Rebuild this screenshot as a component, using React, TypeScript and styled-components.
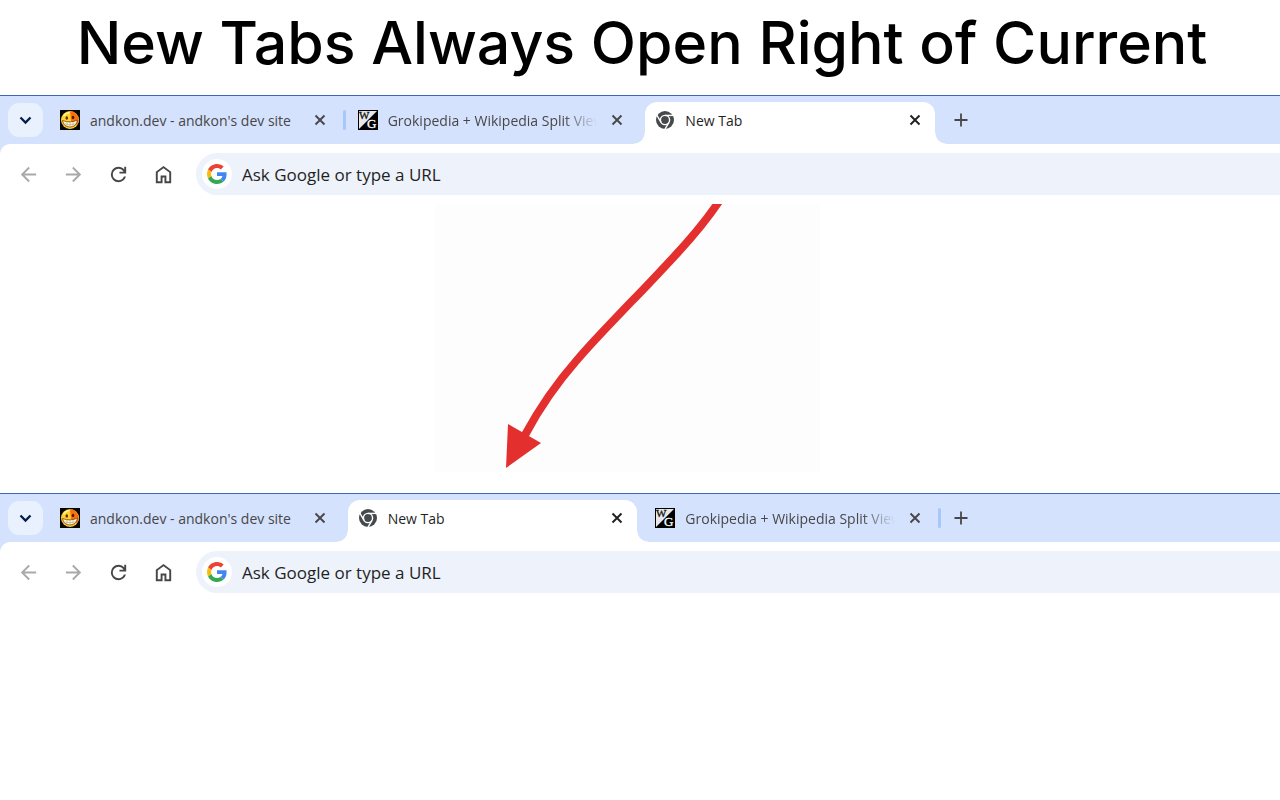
import React from "react";
import styled, { createGlobalStyle, css } from "styled-components";

const Global = createGlobalStyle`
  *, *::before, *::after { box-sizing: border-box; }
  body { margin: 0; background: #fff; color: #1f1f1f; font-family: "Open Sans", "Noto Sans", sans-serif; }
`;

const Page = styled.main`
  display: flex;
  flex-direction: column;
  min-height: 100vh;
  overflow: hidden;
`;

const Headline = styled.h1`
  margin: 0;
  height: 95px;
  padding: 0 0 10px 4px;
  display: flex;
  align-items: center;
  justify-content: center;
  white-space: nowrap;
  font: 500 59px/80px "Inter", sans-serif;
  color: #000;
`;

const BrowserWindow = styled.section`
  border-top: 1px solid #3b69b3;
`;

const TabStrip = styled.div`
  display: flex;
  align-items: flex-end;
  height: 48px;
  background: #d5e2fd;
`;

const IconButton = styled.button`
  display: grid;
  place-items: center;
  flex: none;
  padding: 0;
  border: 0;
  background: none;
  color: #474747;
  svg { display: block; }
`;

const SearchTabs = styled(IconButton)`
  width: 35px;
  height: 34px;
  margin: 0 7px 7px 8px;
  border-radius: 11px;
  background: #e9f1fe;
  color: #041e49;
`;

const TabList = styled.div`
  display: flex;
  gap: 8px;
  flex: 0 1 885px;
  min-width: 0;
`;

const flare = css`
  content: "";
  position: absolute;
  bottom: 0;
  width: 11px;
  height: 11px;
`;

const Tab = styled.div<{ $active?: boolean; $divider?: boolean }>`
  position: relative;
  display: flex;
  align-items: center;
  flex: 1 1 0;
  min-width: 0;
  height: 42px;
  padding: 0 12px 7px 10px;
  border-radius: 12px 12px 0 0;
  color: #474747;
  ${(p) =>
    p.$active &&
    css`
      background: #fff;
      color: #1f1f1f;
      &::before { ${flare} left: -11px; background: radial-gradient(circle at 0 0, transparent 10px, #fff 11px); }
      &::after { ${flare} right: -11px; background: radial-gradient(circle at 100% 0, transparent 10px, #fff 11px); }
    `}
  ${(p) =>
    p.$divider &&
    css`
      &::after {
        content: "";
        position: absolute;
        top: 8px;
        right: -6px;
        width: 3px;
        height: 20px;
        border-radius: 2px;
        background: #a8c7fa;
      }
    `}
`;

const Favicon = styled.span`
  display: grid;
  place-items: center;
  flex: none;
  width: 20px;
  height: 20px;
  margin-right: 10px;
`;

const TabTitle = styled.span<{ $fade?: boolean }>`
  flex: 1;
  min-width: 0;
  padding-top: 2px;
  overflow: hidden;
  white-space: nowrap;
  font-size: 14px;
  line-height: 20px;
  ${(p) => p.$fade && css`mask-image: linear-gradient(90deg, #000 84%, transparent);`}
`;

const CloseTab = styled(IconButton)`
  width: 16px;
  height: 20px;
  margin-left: 12px;
  color: inherit;
`;

const NewTab = styled(IconButton)`
  width: 34px;
  height: 34px;
  margin: 0 0 7px 9px;
`;

const Toolbar = styled.div`
  display: flex;
  align-items: center;
  height: 60px;
  padding-left: 6px;
  border-radius: 10px 0 0 0;
  background: #fff;
`;

const ToolbarBack = styled.div`
  background: #d5e2fd;
`;

const ToolButton = styled(IconButton)`
  width: 45px;
  height: 40px;
  &:disabled { color: #a9a9a9; }
`;

const Omnibox = styled.label`
  display: flex;
  align-items: center;
  flex: 1;
  height: 42px;
  margin-left: 10px;
  padding-left: 6px;
  border-radius: 21px 0 0 21px;
  background: #edf2fb;
`;

const EngineBadge = styled.span`
  display: grid;
  place-items: center;
  flex: none;
  width: 30px;
  height: 30px;
  border-radius: 50%;
  background: #fff;
`;

const UrlField = styled.input`
  flex: 1;
  min-width: 0;
  margin-left: 10px;
  padding: 2px 0 0;
  border: 0;
  outline: 0;
  background: none;
  font: 400 17px/24px "Open Sans", "Noto Sans", sans-serif;
  color: #1f1f1f;
  &::placeholder { color: #1f1f1f; opacity: 1; }
`;

const Viewport = styled.div`
  padding: 0 0 21px 34%;
`;

const ArrowDrawing = styled.svg`
  display: block;
  background: #fdfdfd;
`;

function SmileyIcon() {
  return (
    <svg width="20" height="20" viewBox="0 0 20 20" aria-hidden="true">
      <rect width="20" height="20" fill="#050505" />
      <circle cx="10" cy="10" r="9" fill="#ffd22e" />
      <path d="M10 1a9 9 0 0 1 7 14L11 11z" fill="#f9700f" />
      <path d="M3.500 6q3-4 6-3" stroke="#fff39a" strokeWidth="1.500" fill="none" />
      <ellipse cx="6.800" cy="8" rx="1.300" ry="1.800" fill="#5a3208" />
      <ellipse cx="13" cy="7.500" rx="1.300" ry="1.800" fill="#5a1604" />
      <path d="M2.500 10.500q8 3 15-.5q-1 7-7.500 7t-7.500-6.500z" fill="#fff8e1" stroke="#7d3f08" strokeWidth=".8" />
      <path d="M4 13.800q6 1.800 12 0M7 12v4M10 12v4.500M13 12v4" stroke="#a98d68" strokeWidth=".5" fill="none" />
    </svg>
  );
}

function SplitIcon() {
  return (
    <svg width="20" height="20" viewBox="0 0 20 20" aria-hidden="true">
      <rect width="20" height="20" fill="#000" />
      <path d="M1 1h18L1 19z" fill="#e8e8e8" />
      <g fontFamily="Liberation Serif, serif">
        <text x="1" y="9" fontSize="11" fill="#111" stroke="#111" strokeWidth=".3">W</text>
        <text x="9" y="18" fontSize="13" fill="#fff" stroke="#fff" strokeWidth=".3">G</text>
      </g>
    </svg>
  );
}

function ChromeIcon() {
  return (
    <svg width="18" height="18" viewBox="-9 -9 18 18" aria-hidden="true">
      <circle r="9" fill="#474a4d" />
      <g stroke="#fff" strokeWidth="1.400" fill="none">
        <circle r="4.600" />
        {[0, 120, 240].map((a) => (
          <path key={a} d="M0-4.600H9" transform={`rotate(${a})`} />
        ))}
      </g>
    </svg>
  );
}

function GoogleIcon() {
  return (
    <svg width="20" height="20" viewBox="0 0 48 48" aria-hidden="true">
      <path fill="#ea4335" d="M24 9.500c3.540 0 6.710 1.220 9.210 3.600l6.850-6.850C35.900 2.380 30.470 0 24 0 14.620 0 6.510 5.380 2.560 13.220l7.980 6.190C12.430 13.720 17.740 9.500 24 9.500z" />
      <path fill="#4285f4" d="M46.980 24.550c0-1.570-.15-3.090-.38-4.550H24v9.020h12.940c-.58 2.960-2.260 5.480-4.780 7.180l7.730 6c4.510-4.180 7.090-10.360 7.090-17.650z" />
      <path fill="#fbbc05" d="M10.530 28.590c-.48-1.450-.76-2.990-.76-4.590s.27-3.140.76-4.590l-7.980-6.190C.92 16.460 0 20.120 0 24s.92 7.540 2.560 10.780l7.970-6.190z" />
      <path fill="#34a853" d="M24 48c6.480 0 11.930-2.130 15.890-5.810l-7.730-6c-2.150 1.450-4.920 2.300-8.160 2.300-6.260 0-11.570-4.220-13.470-9.910l-7.980 6.190C6.510 42.620 14.620 48 24 48z" />
    </svg>
  );
}

function Glyph({ d, size = 23 }: { d: string; size?: number }) {
  return (
    <svg width={size} height={size} viewBox="0 0 24 24" fill="currentColor" aria-hidden="true">
      <path d={d} />
    </svg>
  );
}

const glyphs = {
  back: "M20 11H7.830l5.590-5.590L12 4l-8 8 8 8 1.410-1.410L7.830 13H20z",
  forward: "M4 11h12.170l-5.590-5.590L12 4l8 8-8 8-1.410-1.410L16.170 13H4z",
  reload:
    "M12 20q-3.350 0-5.675-2.325T4 12t2.325-5.675T12 4q1.725 0 3.300.712T18 6.750V4h2v7h-7V9h4.200q-.8-1.400-2.187-2.200T12 6Q9.500 6 7.750 7.750T6 12t1.750 4.250T12 18q1.925 0 3.475-1.100T17.650 14h2.100q-.7 2.650-2.850 4.325T12 20",
  home: "M6 19h3v-6h6v6h3v-9l-6-4.500L6 10zm-2 2V9l8-6 8 6v12h-7v-6h-2v6z",
};

function Cross() {
  return (
    <svg width="12" height="12" viewBox="0 0 12 12" stroke="currentColor" strokeWidth="1.900" aria-hidden="true">
      <path d="M1.500 1.500l9 9M10.500 1.500l-9 9" />
    </svg>
  );
}

type TabInfo = { title: string; icon: React.ReactNode; fade?: boolean };

const andkon: TabInfo = { title: "andkon.dev - andkon's dev site", icon: <SmileyIcon /> };
const grokipedia: TabInfo = { title: "Grokipedia + Wikipedia Split View", icon: <SplitIcon />, fade: true };
const newTab: TabInfo = { title: "New Tab", icon: <ChromeIcon /> };

function Browser({ tabs, active, children }: { tabs: TabInfo[]; active: number; children?: React.ReactNode }) {
  return (
    <BrowserWindow>
      <TabStrip>
        <SearchTabs aria-label="Search tabs">
          <svg width="13" height="9" viewBox="0 0 13 9" fill="none" stroke="currentColor" strokeWidth="2.300" aria-hidden="true">
            <path d="M1.500 1.500l5 5 5-5" />
          </svg>
        </SearchTabs>
        <TabList>
          {tabs.map((tab, i) => (
            <Tab key={tab.title} $active={i === active} $divider={i !== active && i + 1 !== active}>
              <Favicon>{tab.icon}</Favicon>
              <TabTitle $fade={tab.fade}>{tab.title}</TabTitle>
              <CloseTab aria-label={`Close ${tab.title}`}>
                <Cross />
              </CloseTab>
            </Tab>
          ))}
        </TabList>
        <NewTab aria-label="New tab">
          <svg width="14" height="14" viewBox="0 0 14 14" stroke="currentColor" strokeWidth="1.800" aria-hidden="true">
            <path d="M7 .5v13M.5 7h13" />
          </svg>
        </NewTab>
      </TabStrip>
      <ToolbarBack>
        <Toolbar>
          <ToolButton aria-label="Back" disabled><Glyph d={glyphs.back} /></ToolButton>
          <ToolButton aria-label="Forward" disabled><Glyph d={glyphs.forward} /></ToolButton>
          <ToolButton aria-label="Reload"><Glyph d={glyphs.reload} /></ToolButton>
          <ToolButton aria-label="Home"><Glyph d={glyphs.home} /></ToolButton>
          <Omnibox>
            <EngineBadge><GoogleIcon /></EngineBadge>
            <UrlField type="text" aria-label="Address and search bar" placeholder="Ask Google or type a URL" />
          </Omnibox>
        </Toolbar>
      </ToolbarBack>
      {children}
    </BrowserWindow>
  );
}

export default function App() {
  return (
    <>
      <Global />
      <Page>
        <Headline>New Tabs Always Open Right of Current</Headline>
        <Browser tabs={[andkon, grokipedia, newTab]} active={2}>
          <Viewport>
            <ArrowDrawing width="385" height="268" viewBox="0 0 385 268" role="img" aria-label="Arrow pointing to the tab below">
              <path d="M285-4C271 17 253 38 235 57C222 71 208 86 195 99C177 118 159 136 142 156C121 180 105 203 90 231" fill="none" stroke="#e3302f" strokeWidth="8" />
              <path d="M73 220l33 19-35 25z" fill="#e3302f" />
            </ArrowDrawing>
          </Viewport>
        </Browser>
        <Browser tabs={[andkon, newTab, grokipedia]} active={1} />
      </Page>
    </>
  );
}
